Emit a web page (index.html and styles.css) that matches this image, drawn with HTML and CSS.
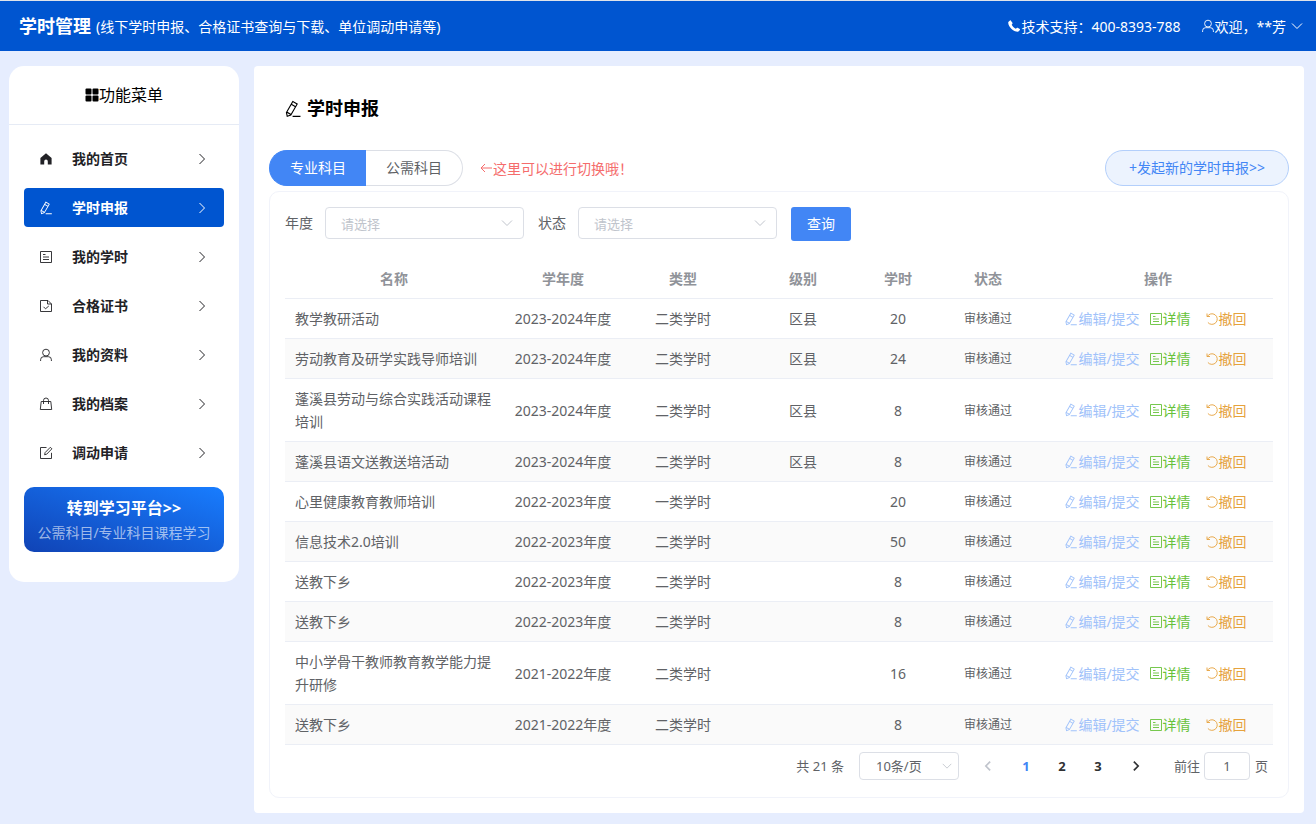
FILE: index.html
```
<!DOCTYPE html>
<html lang="zh-CN">
<head>
    <meta charset="UTF-8">
    <meta name="viewport" content="width=device-width, initial-scale=1.0">
    <title>学时管理</title>
    <link rel="stylesheet" href="styles.css">
</head>
<body>
    <!-- 图标 -->
    <svg class="sprite" aria-hidden="true">
        <symbol id="i-pen" viewBox="0 0 1024 1024"><path fill="currentColor" d="m199.04 672.64 193.984 112 224-387.968-193.92-112-224 388.032zm-23.872 60.16 32.896 148.288 144.896-45.696L175.168 732.8zM455.04 229.248l193.92 112 56.704-98.112-193.984-112-56.64 98.112zM104.32 708.8l384-665.024 304.768 175.936L409.152 884.8h.064l-248.448 78.336L104.32 708.8zm384 254.272v-64h448v64h-448z"/></symbol>
        <symbol id="i-home" viewBox="0 0 14 14"><path fill="currentColor" d="M7 1.2 1.4 6v6.6h3.8V9.4a1.8 1.8 0 0 1 3.6 0v3.2h3.8V6z"/></symbol>
        <symbol id="i-doc" viewBox="0 0 14 14"><path fill="none" stroke="currentColor" stroke-width=".9" d="M1.5 1.5h11v11h-11zM4 4.5h2.500M4 7h6M4 9.500h6"/></symbol>
        <symbol id="i-cert" viewBox="0 0 14 14"><path fill="none" stroke="currentColor" stroke-width=".9" d="M9 1.500H1.500v11h11V5zM8.500 1.500v3.500h4M4.500 7.800l2 2L9.800 7"/></symbol>
        <symbol id="i-user" viewBox="0 0 14 14"><g fill="none" stroke="currentColor" stroke-width=".9"><circle cx="7" cy="4.6" r="3.4"/><path d="M1.6 13v-1.300a3 3 0 0 1 3-3h4.800a3 3 0 0 1 3 3V13"/></g></symbol>
        <symbol id="i-bag" viewBox="0 0 14 14"><path fill="none" stroke="currentColor" stroke-width=".9" d="M2.200 4.500h9.600l.9 8H1.300zM4.500 7V3.500a2.500 2.500 0 0 1 5 0V7"/></symbol>
        <symbol id="i-edit" viewBox="0 0 14 14"><path fill="none" stroke="currentColor" stroke-width=".9" d="M7.500 1.500h-6v11h11V6.800M5.600 8.800l.5-2.200 5.200-5.300 1.600 1.500-5.200 5.400z"/></symbol>
        <symbol id="i-grid" viewBox="0 0 14 14"><g fill="currentColor"><rect x=".5" y=".5" width="6" height="6" rx="1"/><rect x="7.5" y=".5" width="6" height="6" rx="1"/><rect x=".5" y="7.5" width="6" height="6" rx="1"/><rect x="7.5" y="7.5" width="6" height="6" rx="1"/></g></symbol>
        <symbol id="i-phone" viewBox="0 0 14 14"><path fill="currentColor" d="M3 1.500 1.300 3C.9 5.200 2.200 7.700 4.300 9.700s5 3.300 7.200 2.900l1.400-1.700c.2-.3.100-.6-.1-.8l-2.200-1.300c-.3-.2-.6-.1-.8.1l-1 .8C7.200 9 5.200 7 4.700 5.700l.7-1c.2-.3.200-.6 0-.9L3.700 1.500c-.2-.2-.5-.2-.7 0z"/></symbol>
        <symbol id="i-right" viewBox="0 0 14 14"><path fill="none" stroke="currentColor" d="m4.5 2 5 5-5 5"/></symbol>
        <symbol id="i-left" viewBox="0 0 14 14"><path fill="none" stroke="currentColor" d="m9.5 2-5 5 5 5"/></symbol>
        <symbol id="i-down" viewBox="0 0 14 14"><path fill="none" stroke="currentColor" d="m2 4.5 5 5 5-5"/></symbol>
        <symbol id="i-back" viewBox="0 0 14 14"><path fill="none" stroke="currentColor" d="M13 7H2m4-4L2 7l4 4"/></symbol>
        <symbol id="i-undo" viewBox="0 0 14 14"><path fill="none" stroke="currentColor" stroke-width=".9" d="M2 1.5v3h3M2.3 4.500a5.300 5.300 0 1 1 .6 6"/></symbol>
    </svg>

    <header class="topbar">
        <div class="brand">
            <strong>学时管理</strong>
            <span>(线下学时申报、合格证书查询与下载、单位调动申请等)</span>
        </div>
        <div class="top-right">
            <span class="top-item"><svg class="icon"><use href="#i-phone"/></svg>技术支持：400-8393-788</span>
            <button type="button" class="top-item user"><svg class="icon"><use href="#i-user"/></svg>欢迎，**芳<svg class="icon arrow"><use href="#i-down"/></svg></button>
        </div>
    </header>

    <div class="layout">
        <!-- 左侧菜单 -->
        <aside class="sidebar">
            <h2 class="menu-title"><svg class="icon"><use href="#i-grid"/></svg>功能菜单</h2>
            <nav class="menu">
                <a href="#"><svg class="icon"><use href="#i-home"/></svg><span>我的首页</span><svg class="icon"><use href="#i-right"/></svg></a>
                <a href="#" class="active"><svg class="icon"><use href="#i-pen"/></svg><span>学时申报</span><svg class="icon"><use href="#i-right"/></svg></a>
                <a href="#"><svg class="icon"><use href="#i-doc"/></svg><span>我的学时</span><svg class="icon"><use href="#i-right"/></svg></a>
                <a href="#"><svg class="icon"><use href="#i-cert"/></svg><span>合格证书</span><svg class="icon"><use href="#i-right"/></svg></a>
                <a href="#"><svg class="icon"><use href="#i-user"/></svg><span>我的资料</span><svg class="icon"><use href="#i-right"/></svg></a>
                <a href="#"><svg class="icon"><use href="#i-bag"/></svg><span>我的档案</span><svg class="icon"><use href="#i-right"/></svg></a>
                <a href="#"><svg class="icon"><use href="#i-edit"/></svg><span>调动申请</span><svg class="icon"><use href="#i-right"/></svg></a>
            </nav>
            <a href="#" class="platform">
                <strong>转到学习平台&gt;&gt;</strong>
                <span>公需科目/专业科目课程学习</span>
            </a>
        </aside>

        <!-- 主内容 -->
        <main class="main">
            <h1 class="page-title"><svg class="icon"><use href="#i-pen"/></svg>学时申报</h1>

            <div class="toolbar">
                <div class="tabs">
                    <button type="button" class="tab active">专业科目</button>
                    <button type="button" class="tab">公需科目</button>
                </div>
                <p class="hint"><svg class="icon"><use href="#i-back"/></svg>这里可以进行切换哦！</p>
                <button type="button" class="new-btn">+发起新的学时申报&gt;&gt;</button>
            </div>

            <section class="card">
                <form class="filters">
                    <label for="year">年度</label>
                    <div class="select-box">
                        <select id="year"><option>请选择</option></select>
                        <svg class="icon"><use href="#i-down"/></svg>
                    </div>
                    <label for="status">状态</label>
                    <div class="select-box">
                        <select id="status"><option>请选择</option></select>
                        <svg class="icon"><use href="#i-down"/></svg>
                    </div>
                    <button type="button" class="search-btn">查询</button>
                </form>

                <table class="table">
                    <colgroup>
                        <col>
                        <col class="col-m">
                        <col class="col-m">
                        <col class="col-m">
                        <col class="col-hours">
                        <col class="col-status">
                        <col class="col-ops">
                    </colgroup>
                    <thead>
                        <tr><th>名称</th><th>学年度</th><th>类型</th><th>级别</th><th>学时</th><th>状态</th><th>操作</th></tr>
                    </thead>
                    <tbody>
                        <tr>
                            <td>教学教研活动</td><td>2023-2024年度</td><td>二类学时</td><td>区县</td><td>20</td><td class="status">审核通过</td>
                            <td><div class="ops"><div class="ops-main"><button type="button" class="op edit" disabled><svg class="icon"><use href="#i-pen"/></svg>编辑/提交</button><button type="button" class="op detail"><svg class="icon"><use href="#i-doc"/></svg>详情</button></div><button type="button" class="op undo"><svg class="icon"><use href="#i-undo"/></svg>撤回</button></div></td>
                        </tr>
                        <tr>
                            <td>劳动教育及研学实践导师培训</td><td>2023-2024年度</td><td>二类学时</td><td>区县</td><td>24</td><td class="status">审核通过</td>
                            <td><div class="ops"><div class="ops-main"><button type="button" class="op edit" disabled><svg class="icon"><use href="#i-pen"/></svg>编辑/提交</button><button type="button" class="op detail"><svg class="icon"><use href="#i-doc"/></svg>详情</button></div><button type="button" class="op undo"><svg class="icon"><use href="#i-undo"/></svg>撤回</button></div></td>
                        </tr>
                        <tr>
                            <td>蓬溪县劳动与综合实践活动课程培训</td><td>2023-2024年度</td><td>二类学时</td><td>区县</td><td>8</td><td class="status">审核通过</td>
                            <td><div class="ops"><div class="ops-main"><button type="button" class="op edit" disabled><svg class="icon"><use href="#i-pen"/></svg>编辑/提交</button><button type="button" class="op detail"><svg class="icon"><use href="#i-doc"/></svg>详情</button></div><button type="button" class="op undo"><svg class="icon"><use href="#i-undo"/></svg>撤回</button></div></td>
                        </tr>
                        <tr>
                            <td>蓬溪县语文送教送培活动</td><td>2023-2024年度</td><td>二类学时</td><td>区县</td><td>8</td><td class="status">审核通过</td>
                            <td><div class="ops"><div class="ops-main"><button type="button" class="op edit" disabled><svg class="icon"><use href="#i-pen"/></svg>编辑/提交</button><button type="button" class="op detail"><svg class="icon"><use href="#i-doc"/></svg>详情</button></div><button type="button" class="op undo"><svg class="icon"><use href="#i-undo"/></svg>撤回</button></div></td>
                        </tr>
                        <tr>
                            <td>心里健康教育教师培训</td><td>2022-2023年度</td><td>一类学时</td><td></td><td>20</td><td class="status">审核通过</td>
                            <td><div class="ops"><div class="ops-main"><button type="button" class="op edit" disabled><svg class="icon"><use href="#i-pen"/></svg>编辑/提交</button><button type="button" class="op detail"><svg class="icon"><use href="#i-doc"/></svg>详情</button></div><button type="button" class="op undo"><svg class="icon"><use href="#i-undo"/></svg>撤回</button></div></td>
                        </tr>
                        <tr>
                            <td>信息技术2.0培训</td><td>2022-2023年度</td><td>二类学时</td><td></td><td>50</td><td class="status">审核通过</td>
                            <td><div class="ops"><div class="ops-main"><button type="button" class="op edit" disabled><svg class="icon"><use href="#i-pen"/></svg>编辑/提交</button><button type="button" class="op detail"><svg class="icon"><use href="#i-doc"/></svg>详情</button></div><button type="button" class="op undo"><svg class="icon"><use href="#i-undo"/></svg>撤回</button></div></td>
                        </tr>
                        <tr>
                            <td>送教下乡</td><td>2022-2023年度</td><td>二类学时</td><td></td><td>8</td><td class="status">审核通过</td>
                            <td><div class="ops"><div class="ops-main"><button type="button" class="op edit" disabled><svg class="icon"><use href="#i-pen"/></svg>编辑/提交</button><button type="button" class="op detail"><svg class="icon"><use href="#i-doc"/></svg>详情</button></div><button type="button" class="op undo"><svg class="icon"><use href="#i-undo"/></svg>撤回</button></div></td>
                        </tr>
                        <tr>
                            <td>送教下乡</td><td>2022-2023年度</td><td>二类学时</td><td></td><td>8</td><td class="status">审核通过</td>
                            <td><div class="ops"><div class="ops-main"><button type="button" class="op edit" disabled><svg class="icon"><use href="#i-pen"/></svg>编辑/提交</button><button type="button" class="op detail"><svg class="icon"><use href="#i-doc"/></svg>详情</button></div><button type="button" class="op undo"><svg class="icon"><use href="#i-undo"/></svg>撤回</button></div></td>
                        </tr>
                        <tr>
                            <td>中小学骨干教师教育教学能力提升研修</td><td>2021-2022年度</td><td>二类学时</td><td></td><td>16</td><td class="status">审核通过</td>
                            <td><div class="ops"><div class="ops-main"><button type="button" class="op edit" disabled><svg class="icon"><use href="#i-pen"/></svg>编辑/提交</button><button type="button" class="op detail"><svg class="icon"><use href="#i-doc"/></svg>详情</button></div><button type="button" class="op undo"><svg class="icon"><use href="#i-undo"/></svg>撤回</button></div></td>
                        </tr>
                        <tr>
                            <td>送教下乡</td><td>2021-2022年度</td><td>二类学时</td><td></td><td>8</td><td class="status">审核通过</td>
                            <td><div class="ops"><div class="ops-main"><button type="button" class="op edit" disabled><svg class="icon"><use href="#i-pen"/></svg>编辑/提交</button><button type="button" class="op detail"><svg class="icon"><use href="#i-doc"/></svg>详情</button></div><button type="button" class="op undo"><svg class="icon"><use href="#i-undo"/></svg>撤回</button></div></td>
                        </tr>
                    </tbody>
                </table>

                <!-- 分页 -->
                <div class="pagination">
                    <span>共 21 条</span>
                    <div class="select-box small">
                        <select aria-label="每页条数"><option>10条/页</option></select>
                        <svg class="icon"><use href="#i-down"/></svg>
                    </div>
                    <div class="pager">
                        <button type="button" class="step" aria-label="上一页" disabled><svg class="icon"><use href="#i-left"/></svg></button>
                        <button type="button" class="page active">1</button>
                        <button type="button" class="page">2</button>
                        <button type="button" class="page">3</button>
                        <button type="button" class="step" aria-label="下一页"><svg class="icon"><use href="#i-right"/></svg></button>
                    </div>
                    <div class="jump">
                        <label for="jump">前往</label>
                        <input type="text" id="jump" value="1">
                        <span>页</span>
                    </div>
                </div>
            </section>
        </main>
    </div>
</body>
</html>
```
FILE: styles.css
```
* {
    margin: 0;
    padding: 0;
    box-sizing: border-box;
}

body {
    min-height: 100vh;
    background: #e6edfe;
    color: #606266;
    font-family: "Noto Sans", "Noto Sans CJK SC", sans-serif;
    font-size: 14px;
    line-height: 23px;
}

button,
input,
select {
    font: inherit;
    color: inherit;
}

button {
    border: none;
    background: none;
    cursor: pointer;
}

button:disabled {
    cursor: not-allowed;
}

a {
    text-decoration: none;
}

.sprite {
    display: none;
}

.icon {
    width: 14px;
    height: 14px;
    flex: none;
}

/* 顶部 */
.topbar {
    display: flex;
    justify-content: space-between;
    align-items: center;
    height: 51px;
    padding: 0 12px 0 19px;
    border-top: 1px solid #dfe3ea;
    background: #0055d0;
    color: #fff;
}

.brand {
    display: flex;
    align-items: center;
    gap: 5px;
}

.brand strong {
    font-size: 18px;
}

.top-right {
    display: flex;
    align-items: center;
    gap: 20px;
}

.top-item {
    display: flex;
    align-items: center;
}

.user .arrow {
    margin-left: 4px;
}

.layout {
    display: flex;
    align-items: flex-start;
    gap: 15px;
    padding: 15px 12px 11px 9px;
}

/* 左侧菜单 */
.sidebar {
    flex: none;
    width: 230px;
    padding-bottom: 30px;
    border-radius: 15px;
    background: #fff;
}

.menu-title {
    display: flex;
    justify-content: center;
    align-items: center;
    height: 59px;
    border-bottom: 1px solid #e6ebf5;
    color: #000;
    font-size: 16px;
    font-weight: normal;
}

.menu {
    display: flex;
    flex-direction: column;
    gap: 10px;
    padding: 14px 15px 15px;
}

.menu a {
    display: flex;
    align-items: center;
    height: 39px;
    padding: 0 15px;
    border-radius: 4px;
    color: #222226;
    font-weight: bold;
}

.menu span {
    flex: 1;
    margin-left: 19px;
}

.menu .active {
    background: #0055d0;
    color: #fff;
}

.platform {
    display: flex;
    flex-direction: column;
    align-items: center;
    gap: 1px;
    margin: 0 15px;
    padding: 10px 0 8px;
    border-radius: 10px;
    background: linear-gradient(to top right, #1043b5, #187dff);
    color: rgba(255, 255, 255, 0.6);
}

.platform strong {
    color: #fff;
    font-size: 16px;
}

/* 主内容 */
.main {
    flex: 1;
    min-width: 0;
    padding: 15px;
    border-radius: 4px;
    background: #fff;
}

.page-title {
    display: flex;
    align-items: center;
    gap: 5px;
    height: 55px;
    margin-bottom: 14px;
    padding-left: 15px;
    color: #000;
    font-size: 18px;
}

.page-title .icon {
    width: 18px;
    height: 18px;
}

.toolbar {
    display: flex;
    align-items: center;
    margin-bottom: 5px;
}

.tabs {
    display: flex;
}

.tab {
    height: 36px;
    padding: 0 20px 2px;
    border: 1px solid #dcdfe6;
    border-left: none;
    border-radius: 0 18px 18px 0;
}

.tab.active {
    border: 1px solid #4286f5;
    border-right: none;
    border-radius: 18px 0 0 18px;
    background: #4286f5;
    color: #fff;
}

.hint {
    display: flex;
    align-items: center;
    margin-left: 16px;
    color: #f56c6c;
}

.new-btn {
    height: 36px;
    margin-left: auto;
    padding: 0 23px 2px;
    border: 1px solid #b3cffb;
    border-radius: 18px;
    background: #ecf3fe;
    color: #4286f5;
}

.card {
    padding: 15px 15px 17px;
    border: 1px solid #f1f3fa;
    border-radius: 10px;
}

.filters {
    display: flex;
    align-items: flex-start;
    margin-bottom: 18px;
    line-height: 32px;
}

.select-box {
    position: relative;
    width: 199px;
    margin: 0 14px 0 12px;
    color: #c0c4cc;
    font-size: 13px;
}

.select-box select {
    display: block;
    width: 100%;
    height: 32px;
    padding: 0 30px 2px 15px;
    border: 1px solid #dcdfe6;
    border-radius: 4px;
    background: #fff;
    appearance: none;
}

.select-box .icon {
    position: absolute;
    top: 50%;
    right: 10px;
    margin-top: -7px;
    pointer-events: none;
}

.search-btn {
    height: 34px;
    padding: 0 16px;
    border-radius: 3px;
    background: #4286f5;
    color: #fff;
}

/* 表格 */
.table {
    width: 100%;
    table-layout: fixed;
    border-collapse: separate;
    border-spacing: 0;
}

.col-m {
    width: 120px;
}

.col-hours {
    width: 70px;
}

.col-status {
    width: 110px;
}

.col-ops {
    width: 230px;
}

.table th,
.table td {
    padding: 8px 10px;
    border-bottom: 1px solid #ebeef5;
    text-align: center;
}

.table th {
    color: #909399;
}

.table td:first-child {
    text-align: left;
}

.table tbody tr:nth-child(even) {
    background: #fafafa;
}

.table .status {
    font-size: 12px;
}

.ops,
.ops-main {
    display: flex;
    justify-content: center;
    gap: 14px;
}

.ops {
    padding-right: 5px;
}

.ops-main {
    gap: 9px;
}

.op {
    display: flex;
    align-items: center;
}

.edit {
    color: #a0c2fa;
}

.detail {
    color: #67c23a;
}

.undo {
    color: #e6a23c;
}

/* 分页 */
.pagination {
    display: flex;
    justify-content: flex-end;
    align-items: center;
    margin-top: 7px;
    padding-right: 5px;
    font-size: 13px;
}

.select-box.small {
    width: 100px;
    margin-right: 9px;
    margin-left: 15px;
}

.small select {
    height: 28px;
    padding: 0 25px 0 16px;
    color: #606266;
}

.small .icon {
    right: 6px;
    width: 12px;
}

.pager {
    display: flex;
    color: #303133;
    font-weight: bold;
}

.page {
    width: 36px;
    height: 28px;
}

.page.active {
    color: #4286f5;
}

.step {
    display: flex;
    justify-content: center;
    align-items: center;
    width: 40px;
}

.step .icon {
    width: 12px;
    height: 12px;
    stroke-width: 2;
}

.step:disabled {
    color: #c0c4cc;
}

.jump {
    display: flex;
    align-items: center;
    margin-left: 18px;
}

.jump input {
    width: 46px;
    height: 28px;
    margin: 0 5px 0 4px;
    border: 1px solid #dcdfe6;
    border-radius: 4px;
    text-align: center;
}
```
